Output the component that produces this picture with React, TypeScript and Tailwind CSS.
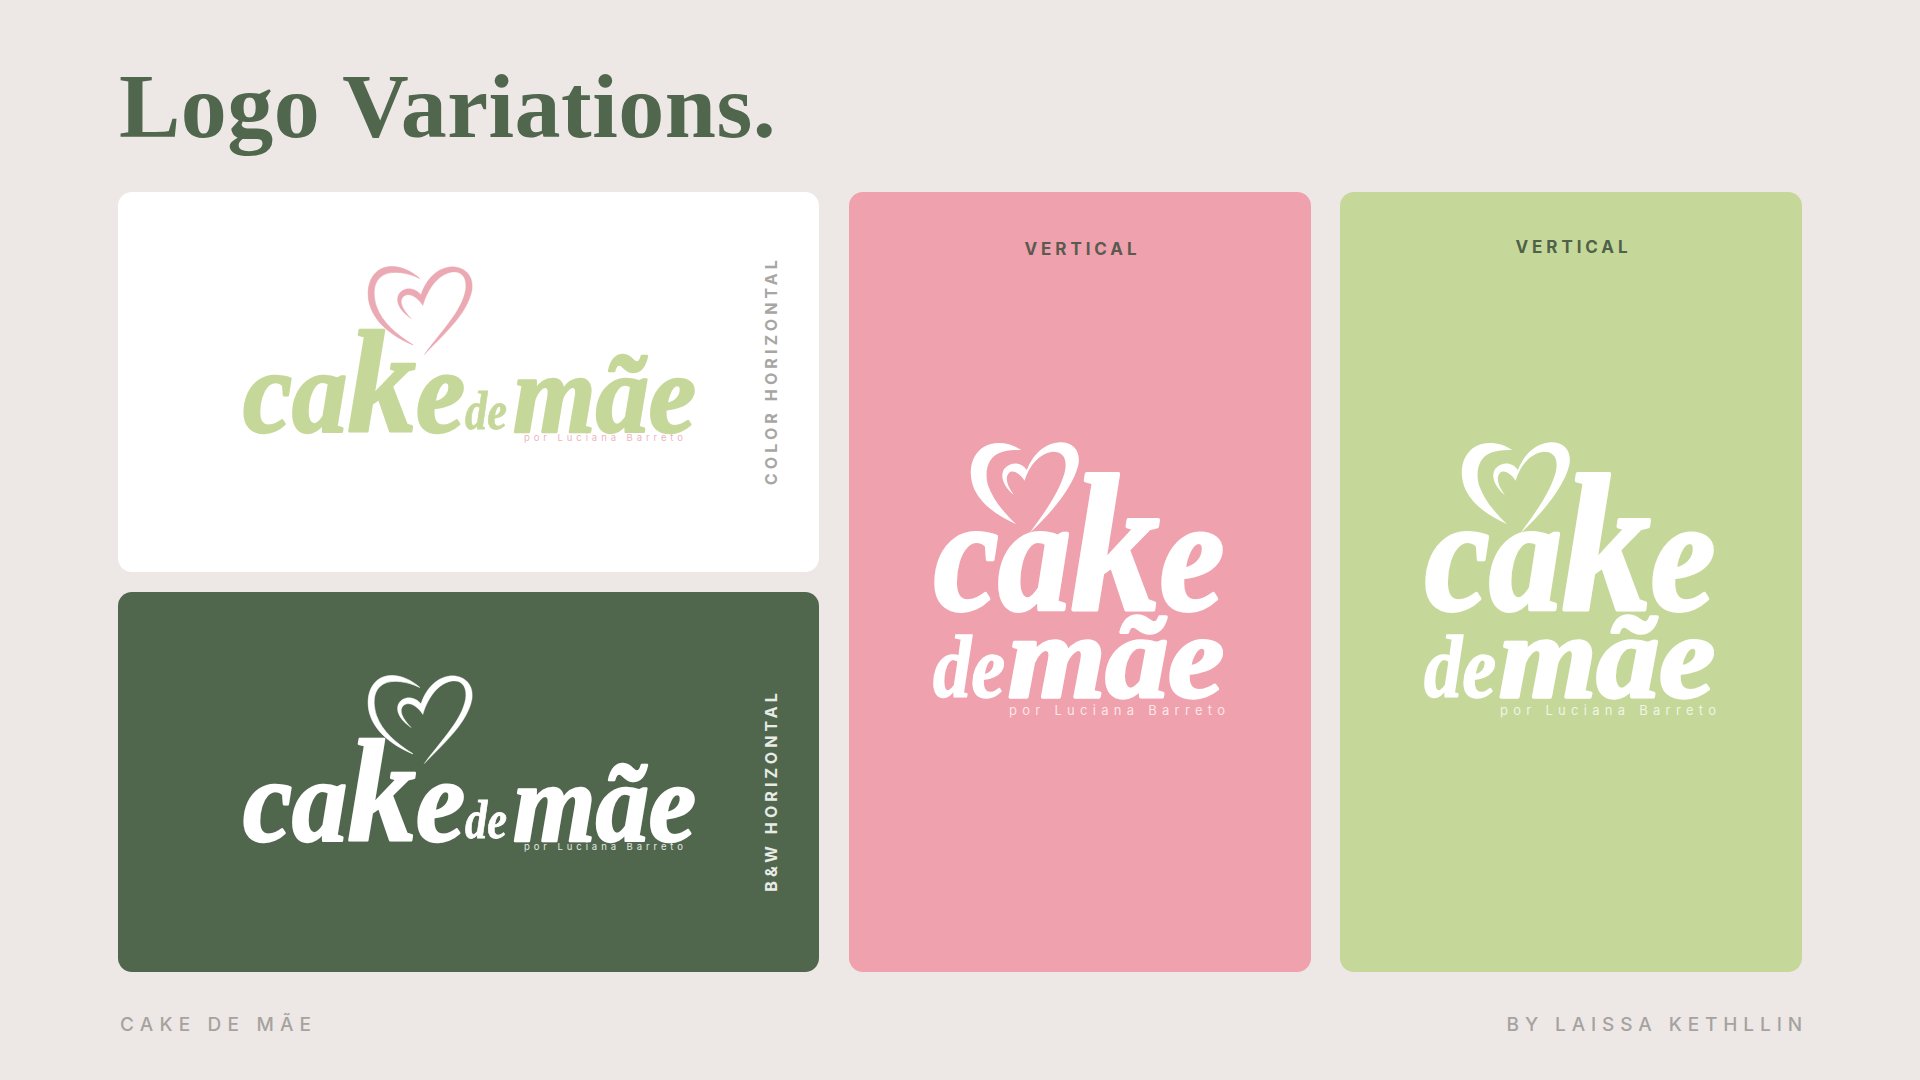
const HEART_A = "M598 85 C560 52 510 38 475 58 C438 80 432 130 445 170 C463 225 520 265 577 288 C525 255 482 220 464 170 C452 130 454 92 487 74 C515 60 560 67 598 85 Z";
const HEART_B = "M612 318 C680 250 747 190 760 120 C766 75 735 46 690 50 C645 56 615 95 602 135 C590 120 565 110 545 122 C520 138 523 175 572 208 C545 180 532 155 548 140 C565 127 590 140 608 168 C620 125 650 75 695 66 C730 60 745 85 740 120 C728 185 670 240 612 318 Z";
const BOLD_A = "M335 95 C300 70 250 65 215 90 C180 120 175 170 195 215 C220 265 270 295 320 318 C285 285 250 245 235 200 C222 150 240 110 280 100 C300 95 320 95 335 95 Z";
const BOLD_B = "M360 345 C420 290 490 210 507 140 C515 95 490 68 445 72 C395 78 365 120 352 155 C335 130 305 130 285 150 C270 170 280 205 313 230 C295 205 285 180 297 165 C310 150 335 170 345 187 C360 140 390 105 430 100 C465 100 475 125 465 165 C445 230 400 290 360 345 Z";

const scriptFont = "'Liberation Serif', 'DejaVu Serif', serif";

function Word({ x, y, w, size, fill, stroke, big, parts }: { x: number; y: number; w: number; size: number; fill: string; stroke: number; big?: number; parts: string[] }) {
  return (
    <text x={x} y={y} textLength={w} lengthAdjust="spacingAndGlyphs" fontFamily={scriptFont} fontWeight={700} fontStyle="italic" fontSize={size} fill={fill} stroke={fill} strokeWidth={stroke} strokeLinejoin="round">
      {parts.map((p, i) => (
        <tspan key={i} fontSize={p === "k" && big ? big : undefined}>{p}</tspan>
      ))}
    </text>
  );
}

function HorizontalLogo({ word, heart, sub }: { word: string; heart: string; sub: string }) {
  return (
    <svg width={456} height={182} viewBox="0 0 456 182" className="block overflow-visible">
      <svg x={125} y={-2} width={108} height={92} viewBox="432 38 334 281" preserveAspectRatio="none" overflow="visible">
        <path d={HEART_A} fill={heart} stroke={heart} strokeWidth={2} />
        <path d={HEART_B} fill={heart} stroke={heart} strokeWidth={1} />
      </svg>
      <Word x={2} y={167} w={222} size={118} big={146} fill={word} stroke={2.5} parts={["ca", "k", "e"]} />
      <Word x={224} y={164} w={42} size={54} fill={word} stroke={0.8} parts={["de"]} />
      <Word x={272} y={167} w={183} size={112} fill={word} stroke={2.5} parts={["mãe"]} />
      <text x={283} y={176} textLength={159} fontFamily="Inter, sans-serif" fontSize={9.5} fill={sub}>por Luciana Barreto</text>
    </svg>
  );
}

function VerticalLogo() {
  return (
    <svg width={296} height={282} viewBox="0 0 296 282" className="block overflow-visible">
      <svg x={36} y={-3} width={113} height={95} viewBox="175 65 340 285" overflow="visible">
        <path d={BOLD_A} fill="#ffffff" />
        <path d={BOLD_B} fill="#ffffff" />
      </svg>
      <Word x={2} y={166} w={290} size={160} big={196} fill="#ffffff" stroke={4} parts={["ca", "k", "e"]} />
      <Word x={1} y={254} w={72} size={88} fill="#ffffff" stroke={1.5} parts={["de"]} />
      <Word x={76} y={254} w={216} size={118} fill="#ffffff" stroke={3.5} parts={["mãe"]} />
      <text x={77} y={272} textLength={216} fontFamily="Inter, sans-serif" fontSize={13} fill="#ffffff" fillOpacity={0.75}>por Luciana Barreto</text>
    </svg>
  );
}

function SideLabel({ text, color, top }: { text: string; color: string; top: string }) {
  return (
    <span className={`absolute right-[38px] ${top} rotate-180 [writing-mode:vertical-rl] font-['Inter',sans-serif] text-[16px] leading-[20px] font-bold tracking-[4.1px] whitespace-nowrap ${color}`}>
      {text}
    </span>
  );
}

function VerticalCard({ bg, labelColor, labelPt, logoGap }: { bg: string; labelColor: string; labelPt: string; logoGap: string }) {
  return (
    <div className={`flex w-[462px] flex-col items-center rounded-[14px] ${bg} ${labelPt}`}>
      <span className={`ml-[5px] font-['Inter',sans-serif] text-[17px] leading-[20px] font-bold tracking-[3.9px] ${labelColor}`}>VERTICAL</span>
      <div className={logoGap}>
        <VerticalLogo />
      </div>
    </div>
  );
}

export default function App() {
  return (
    <div className="flex h-[1080px] w-[1920px] flex-col overflow-hidden bg-[#ede8e5] px-[118px]">
      <h1 className="h-[192px] pt-[56px] pl-[1px] font-['Liberation_Serif',serif] text-[92px] leading-[100px] font-bold tracking-[0.5px] text-[#50674e]">
        Logo Variations.
      </h1>
      <div className="flex h-[780px] gap-[29px]">
        <div className="flex w-[702px] flex-col gap-[20px] pr-[1px]">
          <div className="relative flex h-[380px] justify-center rounded-[14px] bg-white pt-[73px]">
            <HorizontalLogo word="#c6d899" heart="#eba9b4" sub="#f0b4bf" />
            <SideLabel text="COLOR HORIZONTAL" color="text-[#a8a6a4]" top="top-[64px]" />
          </div>
          <div className="relative flex h-[380px] justify-center rounded-[14px] bg-[#50674e] pt-[82px]">
            <HorizontalLogo word="#ffffff" heart="#ffffff" sub="#e4e8e2" />
            <SideLabel text="B&W HORIZONTAL" color="text-[#e9ebe7]" top="top-[97px]" />
          </div>
        </div>
        <VerticalCard bg="bg-[#efa1ad]" labelColor="text-[#5b5a50]" labelPt="pt-[47px]" logoGap="mt-[184px]" />
        <VerticalCard bg="bg-[#c6d899]" labelColor="text-[#4f6249]" labelPt="pt-[45px]" logoGap="mt-[186px]" />
      </div>
      <div className="flex items-center justify-between pt-[42px] font-['Inter',sans-serif] text-[19px] leading-[22px] font-medium text-[#a5a2a0]">
        <span className="pl-[2px] tracking-[6.2px]">CAKE DE MÃE</span>
        <span className="-mr-[6px] tracking-[5.9px]">BY LAISSA KETHLLIN</span>
      </div>
    </div>
  );
}
